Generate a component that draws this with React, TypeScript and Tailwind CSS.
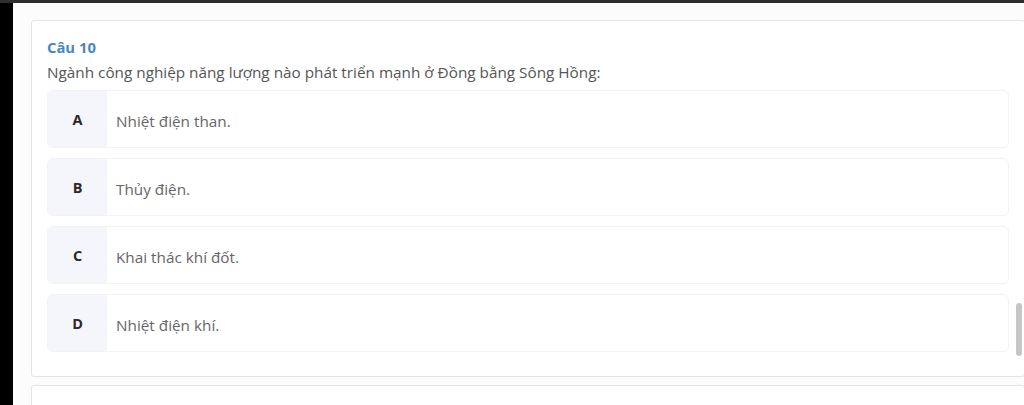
const options = [
  { key: "A", text: "Nhiệt điện than." },
  { key: "B", text: "Thủy điện." },
  { key: "C", text: "Khai thác khí đốt." },
  { key: "D", text: "Nhiệt điện khí." },
];

export default function App() {
  return (
    <div className="h-[405px] w-[1024px] overflow-hidden bg-black flex flex-col" style={{ fontFamily: '"Open Sans", "Noto Sans", sans-serif' }}>
      <div className="h-[3px] bg-[#2e2e2e]" />
      <div className="flex flex-1 min-h-0">
        <div className="w-[13px] bg-black" />
        <div className="relative flex-1 bg-[#fcfcfc] pl-[18px] pt-[17px] overflow-hidden">
          <div className="w-[994px] bg-white border border-[#e4e4e4] rounded-[3px] px-[15px] pt-[15px] pb-[24px]">
            <div className="text-[14.8px] font-bold text-[#4a86c5] leading-[22px]">Câu 10</div>
            <div className="text-[15.3px] text-[#555] leading-[20px] mt-[4px]">
              Ngành công nghiệp năng lượng nào phát triển mạnh ở Đồng bằng Sông Hồng:
            </div>
            <div className="mt-[8px] flex flex-col gap-[10px]">
              {options.map((o) => (
                <div key={o.key} className="flex h-[58px] border border-[#f3f3f3] rounded-[6px] overflow-hidden">
                  <div className="w-[59px] bg-[#f4f6fb] flex items-center justify-center pt-[2px] text-[14.5px] font-bold text-[#2a2a2a]">
                    {o.key}
                  </div>
                  <div className="flex items-center pl-[9px] pt-[4px] text-[15.3px] text-[#666]">{o.text}</div>
                </div>
              ))}
            </div>
          </div>
          <div className="mt-[8px] w-[994px] h-[40px] bg-white border border-[#e4e4e4] rounded-[3px]" />
          <div className="absolute left-[1003px] top-[300px] w-[6px] h-[53px] rounded-full bg-[#c6c6c6]" />
        </div>
      </div>
    </div>
  );
}
